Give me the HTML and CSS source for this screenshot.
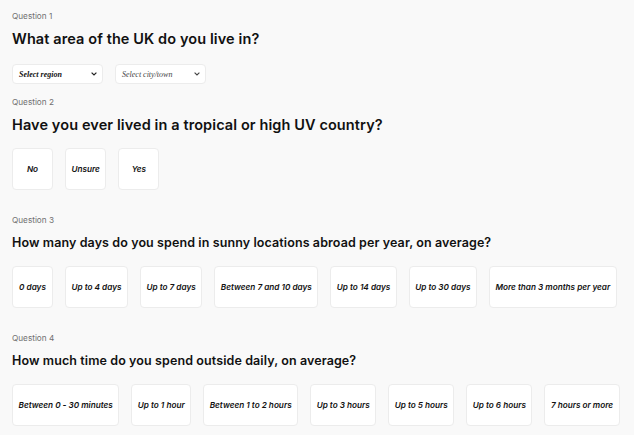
FILE: index.html
```html
<!doctype html>
<html lang="en">
<head>
<meta charset="utf-8" />
<title>Sun exposure questionnaire</title>
<link rel="stylesheet" href="styles.css">
</head>
<body>
 <section class="question">
   <div class="q-label">Question 1</div>
   <h2 class="q-title">What area of the UK do you live in?</h2>
   <div class="selects">
     <div class="select select-strong">
       <span>Select region</span>
       <svg class="chev" width="6" height="4" viewBox="0 0 6 4"><path d="M0.6 0.6 L3 3 L5.4 0.6" fill="none" stroke="#222" stroke-width="1.2"/></svg>
     </div>
     <div class="select">
       <span>Select city/town</span>
       <svg class="chev" width="6" height="4" viewBox="0 0 6 4"><path d="M0.6 0.6 L3 3 L5.4 0.6" fill="none" stroke="#444" stroke-width="1.1"/></svg>
     </div>
   </div>
 </section>

 <section class="question">
   <div class="q-label">Question 2</div>
   <h2 class="q-title">Have you ever lived in a tropical or high UV country?</h2>
   <div class="options">
     <button class="opt">No</button>
     <button class="opt">Unsure</button>
     <button class="opt">Yes</button>
   </div>
 </section>

 <section class="question">
   <div class="q-label">Question 3</div>
   <h2 class="q-title q-title-sm">How many days do you spend in sunny locations abroad per year, on average?</h2>
   <div class="options">
     <button class="opt">0 days</button>
     <button class="opt">Up to 4 days</button>
     <button class="opt">Up to 7 days</button>
     <button class="opt">Between 7 and 10 days</button>
     <button class="opt">Up to 14 days</button>
     <button class="opt">Up to 30 days</button>
     <button class="opt">More than 3 months per year</button>
   </div>
 </section>

 <section class="question">
   <div class="q-label">Question 4</div>
   <h2 class="q-title q-title-sm">How much time do you spend outside daily, on average?</h2>
   <div class="options">
     <button class="opt">Between 0 - 30 minutes</button>
     <button class="opt">Up to 1 hour</button>
     <button class="opt">Between 1 to 2 hours</button>
     <button class="opt">Up to 3 hours</button>
     <button class="opt">Up to 5 hours</button>
     <button class="opt">Up to 6 hours</button>
     <button class="opt">7 hours or more</button>
   </div>
 </section>
</body>
</html>
```

FILE: styles.css
```css
:root{
 --bg:#f9f9f9;
 --card:#fff;
 --line:#ececec;
 --text:#111;
 --muted:#707070;
}
*{box-sizing:border-box;margin:0;padding:0}
body{
  background:var(--bg);color:var(--text);
  font-family:Inter,"Open Sans",sans-serif;
  padding:10px 12px 0;
}
.question{margin-bottom:24px}
.question:first-child{margin-bottom:12px}
.q-label{font-size:8.2px;line-height:12px;color:var(--muted)}
.q-title{font-size:14.5px;line-height:20px;font-weight:600;margin-top:7px;letter-spacing:0.1px}
.q-title-sm{font-size:12.5px}
.selects{display:flex;gap:12px;margin-top:15px}
.select{
  width:91px;height:20px;background:var(--card);
  border:1px solid var(--line);border-radius:4px;
  display:flex;align-items:center;justify-content:space-between;
  padding:0 5px 0 6px;
  font-family:"Liberation Serif",serif;font-style:italic;font-size:8px;color:#444;
}
.select-strong{font-weight:700;color:#111}
.chev{flex:none}
.options{display:flex;gap:12px;margin-top:13px}
.opt{
  min-width:41px;height:42px;padding:0 5.5px;
  background:var(--card);border:1px solid var(--line);border-radius:4px;
  font-family:Inter,"Open Sans",sans-serif;font-style:italic;font-weight:600;
  font-size:8.2px;color:var(--text);white-space:nowrap;
}
```
